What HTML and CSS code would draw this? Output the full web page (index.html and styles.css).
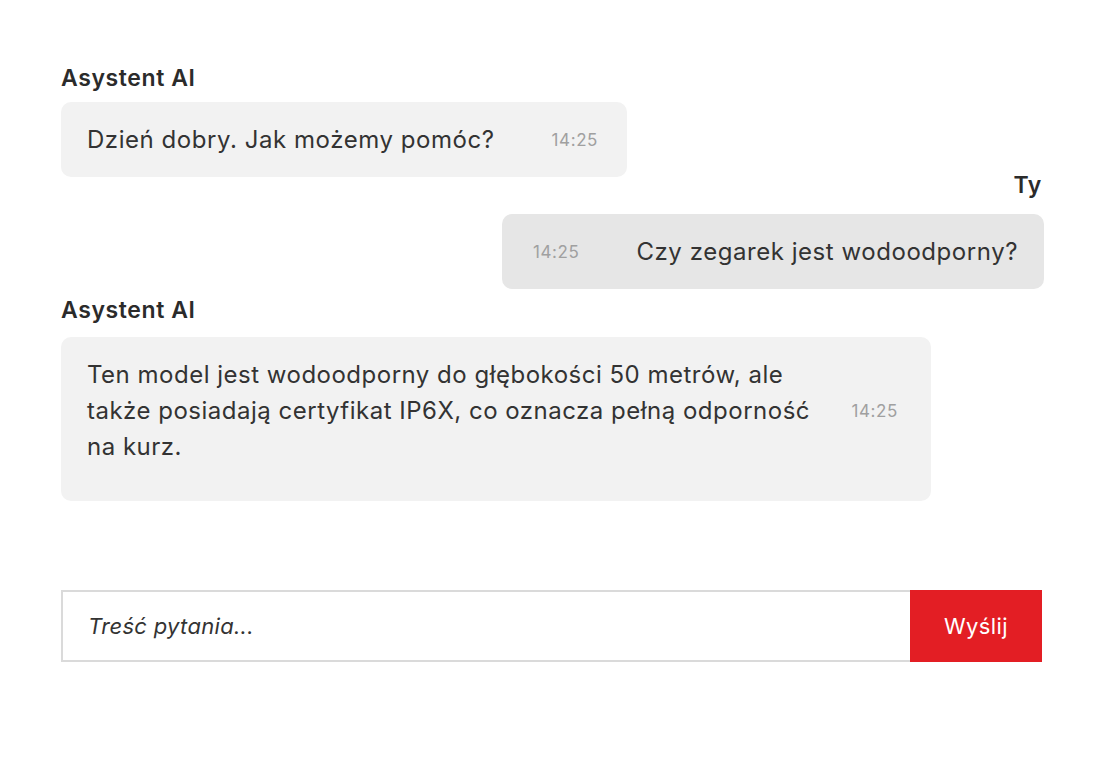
FILE: index.html
```html
<!DOCTYPE html>
<html lang="pl">
<head>
    <meta charset="utf-8">
    <meta name="viewport" content="width=device-width, initial-scale=1.0">
    <title>Asystent AI</title>
    <link rel="stylesheet" href="styles.css">
</head>
<body>
    <main class="chat">
        <div class="messages">
            <div class="msg msg-ai">
                <div class="msg-author">Asystent AI</div>
                <div class="bubble">
                    <p class="bubble-text">Dzień dobry. Jak możemy pomóc?</p>
                    <span class="bubble-time">14:25</span>
                </div>
            </div>
            <div class="msg msg-user">
                <div class="msg-author">Ty</div>
                <div class="bubble">
                    <span class="bubble-time">14:25</span>
                    <p class="bubble-text">Czy zegarek jest wodoodporny?</p>
                </div>
            </div>
            <div class="msg msg-ai">
                <div class="msg-author">Asystent AI</div>
                <div class="bubble bubble-long">
                    <p class="bubble-text">Ten model jest wodoodporny do głębokości 50 metrów, ale także posiadają certyfikat IP6X, co oznacza pełną odporność na kurz.</p>
                    <span class="bubble-time">14:25</span>
                </div>
            </div>
        </div>

        <form class="ask" onsubmit="return false;">
            <input type="text" class="ask-input" placeholder="Treść pytania...">
            <button type="submit" class="ask-button">Wyślij</button>
        </form>
    </main>
</body>
</html>
```
FILE: styles.css
```css
body {
    margin: 0;
    background: #fff;
    color: #333;
    font-family: Inter, "Noto Sans", sans-serif;
}

.chat {
    width: 983px;
    padding: 70px 0 0 61px;
}

.messages {
    display: flex;
    flex-direction: column;
}

.msg {
    display: flex;
    flex-direction: column;
    align-items: flex-start;
}
.msg-ai + .msg-user {
    margin-top: 0;
}
.msg-user + .msg-ai {
    margin-top: 13px;
}
.msg-user {
    align-items: flex-end;
}

.msg-author {
    font-size: 23px;
    line-height: 16px;
    font-weight: 600;
    letter-spacing: 0.6px;
    color: #2b2b2b;
    margin-bottom: 16px;
}
.msg-user .msg-author {
    margin-bottom: 21px;
    margin-right: 2px;
}
.msg-user + .msg-ai .msg-author {
    margin-bottom: 19px;
}

/* dymek wiadomosci */
.bubble {
    display: flex;
    align-items: center;
    gap: 57px;
    padding: 20px 29px 19px 26px;
    background: #f2f2f2;
    border-radius: 10px;
}
.msg-user .bubble {
    background: #e6e6e6;
    padding: 20px 26px 19px 31px;
    gap: 57px;
}
.bubble-long {
    width: 870px;
    box-sizing: border-box;
    gap: 36px;
    padding: 20px 33px 36px 26px;
}
.bubble-long .bubble-text {
    flex: 1;
}

.bubble-text {
    margin: 0;
    font-size: 24px;
    line-height: 36px;
    letter-spacing: 0.55px;
    color: #333;
}
.bubble-long .bubble-text {
    letter-spacing: 0.5px;
}
.bubble-time {
    font-size: 17px;
    line-height: 36px;
    letter-spacing: 0.6px;
    color: #a0a0a0;
    white-space: nowrap;
}

/* pole pytania */
.ask {
    display: flex;
    width: 981px;
    height: 72px;
    margin-top: 89px;
    box-sizing: border-box;
    border: 2px solid #dadada;
    border-right: 0;
}
.ask-input {
    flex: 1;
    border: 0;
    outline: 0;
    padding: 0 0 0 25px;
    font-family: inherit;
    font-size: 22px;
    font-style: italic;
    color: #333;
    background: #fff;
}
.ask-input::placeholder {
    color: #333;
    letter-spacing: 0.3px;
}
.ask-button {
    width: 132px;
    margin: -2px 0;
    border: 0;
    background: #e31e24;
    color: #fff;
    font-family: inherit;
    font-size: 22px;
    letter-spacing: 0.4px;
    cursor: pointer;
}
```
